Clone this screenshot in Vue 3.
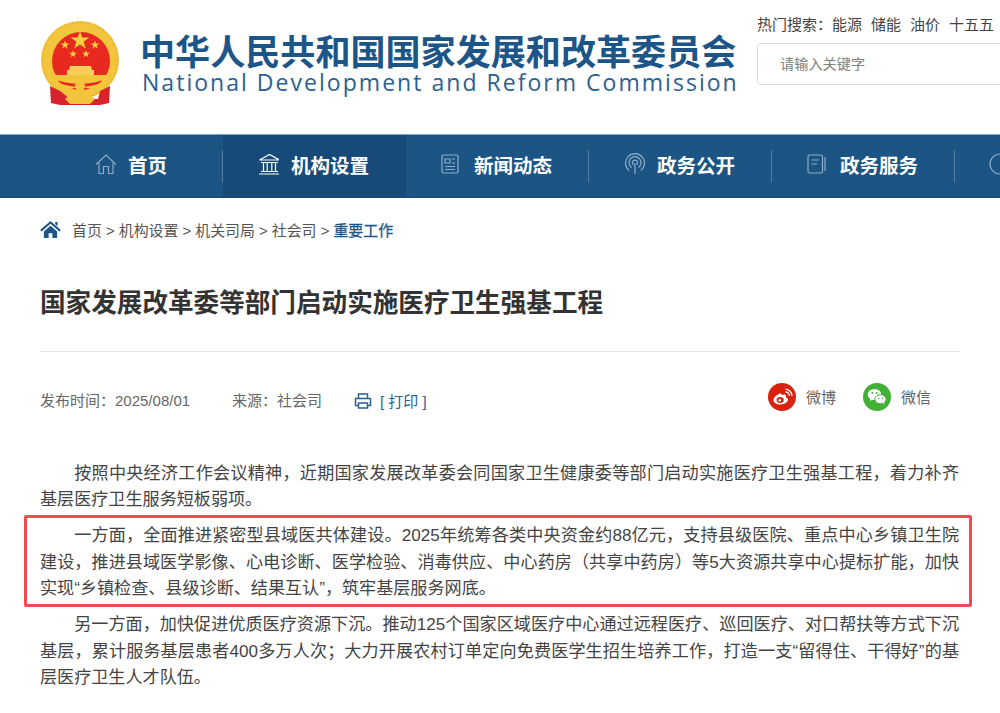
<template>
  <div class="page">
    <header class="top">
      <svg class="emblem" viewBox="0 0 80 86" width="80" height="86">
        <circle cx="40" cy="40" r="39" fill="#f2c53d" />
        <circle cx="40" cy="40" r="37.5" fill="none" stroke="#e2a92c" stroke-width="1" stroke-dasharray="2 2" />
        <circle cx="41" cy="41" r="29" fill="#e8291f" />
        <polygon points="40,11 42.2,17.6 49.3,17.6 43.6,21.8 45.7,28.5 40,24.4 34.3,28.5 36.4,21.8 30.7,17.6 37.8,17.6" fill="#f7d23e" />
        <polygon points="25,20.5 26,23.6 29.4,23.6 26.7,25.6 27.7,28.8 25,26.8 22.3,28.8 23.3,25.6 20.6,23.6 24,23.6" fill="#f7d23e" />
        <polygon points="55,20.5 56,23.6 59.4,23.6 56.7,25.6 57.7,28.8 55,26.8 52.3,28.8 53.3,25.6 50.6,23.6 54,23.6" fill="#f7d23e" />
        <polygon points="33,30 33.9,32.7 36.8,32.7 34.5,34.4 35.4,37.2 33,35.5 30.6,37.2 31.5,34.4 29.2,32.7 32.1,32.7" fill="#f7d23e" />
        <polygon points="46,30 46.9,32.7 49.8,32.7 47.5,34.4 48.4,37.2 46,35.5 43.6,37.2 44.5,34.4 42.2,32.7 45.1,32.7" fill="#f7d23e" />
        <path d="M30 46 H51 L52 50 H54 V55 H27 V50 H29 Z" fill="#f4cf5a" />
        <path d="M13 55 H67 L65 64 C58 70 50 70 41 66 C30 70 22 70 15 64 Z" fill="#f2c53d" />
        <path d="M18 60 C28 65 52 65 62 60 L60 63 C50 68 30 68 20 63 Z" fill="#e8291f" />
        <path d="M10 66 L20 71 L30 79 L58 79 L60 71 L70 66 L69 83 L60 85 L20 85 L11 83 Z" fill="#d8232a" />
        <circle cx="40" cy="66" r="5" fill="#f2c53d" />
        <path d="M25 79 C33 72 47 72 55 79 L50 84 H30 Z" fill="#f2c53d" />
      </svg>
      <div class="brand">
        <div class="cn">中华人民共和国国家发展和改革委员会</div>
        <div class="en">National Development and Reform Commission</div>
      </div>
      <div class="tools">
        <div class="hot">
          <span>热门搜索：</span>
          <span v-for="w in hotWords" :key="w" class="word">{{ w }}</span>
        </div>
        <div class="search">请输入关键字</div>
      </div>
    </header>

    <nav class="nav">
      <a v-for="(item, i) in navItems" :key="item.label" class="nav-item" :class="{ active: i === 1 }">
        <svg v-if="item.icon === 'home'" class="nav-ico" viewBox="-1 0 22 22" width="22" height="22">
          <path d="M1 11.5 L11 2 L21 11.5 M4 10 V20.5 H8.5 V13.5 H13.5 V20.5 H18 V10" />
        </svg>
        <svg v-else-if="item.icon === 'bank'" class="nav-ico bright" viewBox="-1.5 0 22 22" width="22" height="22">
          <path d="M1 7 L11 1.5 L21 7 Z M2.5 9.5 H19.5 M5 10 V18 M8.7 10 V18 M13.3 10 V18 M17 10 V18 M2.5 18.5 H19.5 M0.5 21 H21.5" />
        </svg>
        <svg v-else-if="item.icon === 'news'" class="nav-ico" viewBox="1 0 22 22" width="22" height="22">
          <path d="M4.5 2 H17.5 Q19 2 19 3.5 V18.5 Q19 20 17.5 20 H4.5 Q3 20 3 18.5 V3.5 Q3 2 4.5 2 Z M6 6 H11 V10 H6 Z M13 6 H16 M13 10 H16 M6 13.5 H16 M6 16.5 H16" />
        </svg>
        <svg v-else-if="item.icon === 'signal'" class="nav-ico" viewBox="-1 0 22 22" width="22" height="22">
          <path d="M5 17.5 A9.5 9.5 0 1 1 17 17.5 M7.5 14.5 A6 6 0 1 1 14.5 14.5 M9.5 11.8 A2.6 2.6 0 1 1 12.5 11.8 M11 10 V21" />
        </svg>
        <svg v-else-if="item.icon === 'book'" class="nav-ico" viewBox="1 0 22 22" width="22" height="22">
          <path d="M4.5 2 H16 Q17.5 2 17.5 3.5 V18.5 Q17.5 20 16 20 H4.5 Q3 20 3 18.5 V3.5 Q3 2 4.5 2 Z M6.5 7 H14 M6.5 11 H12 M20 4 V18" />
        </svg>
        <svg v-else class="nav-ico" viewBox="0 0 22 22" width="22" height="22">
          <circle cx="11" cy="11" r="10" />
        </svg>
        <span v-if="item.label">{{ item.label }}</span>
      </a>
    </nav>

    <main class="main">
      <div class="crumb">
        <svg class="crumb-home" viewBox="0 0 22 18" width="21" height="17">
          <path d="M11 0 L22 9.5 L20.4 11.2 L11 3 L1.6 11.2 L0 9.5 Z" />
          <path d="M4 11 L11 5 L18 11 V18 H13 V13 H9 V18 H4 Z" />
          <path d="M16 1 H18.5 V5.5 L16 3.3 Z" />
        </svg>
        <span>首页 &gt; 机构设置 &gt; 机关司局 &gt; 社会司 &gt; </span>
        <b>重要工作</b>
      </div>

      <h1 class="title">国家发展改革委等部门启动实施医疗卫生强基工程</h1>

      <div class="meta">
        <span class="date">发布时间：2025/08/01</span>
        <span class="source">来源：社会司</span>
        <svg class="printer" viewBox="0 0 18 16" width="18" height="16">
          <path d="M4.5 5 V1 H13.5 V5 M4.5 12.5 H1.5 V5.5 H16.5 V12.5 H13.5 M4.5 10 H13.5 V15 H4.5 Z" />
        </svg>
        <span class="print">[ 打印 ]</span>
        <div class="share">
          <svg viewBox="0 0 28 28" width="28" height="28">
            <circle cx="14" cy="14" r="14" fill="#d8230f" />
            <path d="M12 10.5 C8.5 11.6 5.5 14.6 5.5 17.2 C5.5 19.8 8.7 21.5 12.3 21.5 C16.8 21.5 20 19 20 16.6 C20 15.2 18.8 14.6 17.9 14.4 C18.4 13 18 11.6 16.4 11.4 C15.3 11.3 14.2 11.8 13.6 12.1 C13.8 10.9 13.3 10.1 12 10.5 Z" fill="#fff" />
            <ellipse cx="12.2" cy="17" rx="3.6" ry="2.9" fill="#d8230f" />
            <circle cx="11.7" cy="17.2" r="1.3" fill="#fff" />
            <path d="M17.5 9 A4 4 0 0 1 21.5 13 M17.5 6.2 A6.8 6.8 0 0 1 24 13" fill="none" stroke="#fff" stroke-width="1.3" />
          </svg>
          <span class="share-label">微博</span>
          <svg class="wx" viewBox="0 0 28 28" width="28" height="28">
            <circle cx="14" cy="14" r="14" fill="#41b035" />
            <ellipse cx="11.5" cy="11.5" rx="6.7" ry="5.6" fill="#fff" />
            <path d="M7.5 15 L6.8 18 L10 16.3 Z" fill="#fff" />
            <ellipse cx="17.5" cy="16.2" rx="5.6" ry="4.6" fill="#fff" stroke="#41b035" stroke-width="1" />
            <path d="M20 20 L21.4 22 L21 19 Z" fill="#fff" />
            <circle cx="9.3" cy="10" r="1" fill="#41b035" />
            <circle cx="13.6" cy="10" r="1" fill="#41b035" />
            <circle cx="15.6" cy="15.2" r=".8" fill="#41b035" />
            <circle cx="19.4" cy="15.2" r=".8" fill="#41b035" />
          </svg>
          <span class="share-label">微信</span>
        </div>
      </div>

      <article class="article">
        <p>按照中央经济工作会议精神，近期国家发展改革委会同国家卫生健康委等部门启动实施医疗卫生强基工程，着力补齐基层医疗卫生服务短板弱项。</p>
        <p class="marked">一方面，全面推进紧密型县域医共体建设。2025年统筹各类中央资金约88亿元，支持县级医院、重点中心乡镇卫生院建设，推进县域医学影像、心电诊断、医学检验、消毒供应、中心药房（共享中药房）等5大资源共享中心提标扩能，加快实现“乡镇检查、县级诊断、结果互认”，筑牢基层服务网底。</p>
        <p>另一方面，加快促进优质医疗资源下沉。推动125个国家区域医疗中心通过远程医疗、巡回医疗、对口帮扶等方式下沉基层，累计服务基层患者400多万人次；大力开展农村订单定向免费医学生招生培养工作，打造一支“留得住、干得好”的基层医疗卫生人才队伍。</p>
      </article>
    </main>
  </div>
</template>

<script setup>
const hotWords = ['能源', '储能', '油价', '十五五']
const navItems = [
  { label: '首页', icon: 'home' },
  { label: '机构设置', icon: 'bank' },
  { label: '新闻动态', icon: 'news' },
  { label: '政务公开', icon: 'signal' },
  { label: '政务服务', icon: 'book' },
  { label: '', icon: 'circle' }
]
</script>

<style>
html, body { margin: 0; background: #fff; overflow: hidden; }
</style>

<style scoped>
.page {
  width: 1000px;
  height: 713px;
  overflow: hidden;
  font-family: "Liberation Sans", "Noto Sans CJK SC", sans-serif;
  color: #333;
}
.top {
  height: 134px;
  box-sizing: border-box;
  padding: 20px 0 0 40px;
  display: flex;
  align-items: flex-start;
}
.emblem { flex: none; }
.brand { margin-left: 20px; width: 600px; flex: none; padding-top: 13px; }
.cn {
  font-size: 35.1px;
  line-height: 40px;
  font-weight: 700;
  color: #1c5587;
  white-space: nowrap;
}
.en {
  font-family: "Open Sans", sans-serif;
  font-size: 23px;
  line-height: 26px;
  letter-spacing: 2.03px;
  color: #2a6192;
  white-space: nowrap;
  margin-left: 2px;
  margin-top: -4px;
}
.tools { margin-left: 17px; flex: none; margin-top: -6px; }
.hot { font-size: 15px; line-height: 22px; color: #444; white-space: nowrap; }
.word { margin-right: 9px; }
.search {
  margin-top: 7px;
  width: 300px;
  height: 42px;
  box-sizing: border-box;
  border: 1px solid #ddd;
  border-radius: 4px;
  padding-left: 22px;
  font-size: 14.2px;
  line-height: 40px;
  color: #808080;
}
.nav {
  height: 64px;
  box-sizing: border-box;
  padding-left: 40px;
  display: flex;
  overflow: hidden;
  background: #1c5484;
  border-top: 1px solid #7fa6c6;
  border-bottom: 1px solid #164a75;
}
.nav-item {
  flex: none;
  width: 183px;
  box-sizing: border-box;
  padding: 0 0 4px 34px;
  display: flex;
  align-items: center;
  gap: 12px;
  position: relative;
  color: #fff;
  font-size: 19.5px;
  font-weight: 700;
}
.nav-item:first-child { padding-left: 54px; }
.nav-item::after {
  content: "";
  position: absolute;
  right: 0;
  top: 15px;
  bottom: 15px;
  width: 1px;
  background: rgba(255, 255, 255, 0.25);
}
.nav-item.active { background: #174a78; }
.nav-item.active::after { display: none; }
.nav-ico { flex: none; fill: none; stroke: #8fadc8; stroke-width: 1.2; }
.nav-ico.bright { stroke: #fff; }
.main { padding: 0 41px 0 40px; }
.crumb {
  margin-top: 20px;
  display: flex;
  align-items: center;
  height: 22px;
  font-size: 14.9px;
  color: #555;
  white-space: pre;
}
.crumb-home { fill: #1c5587; margin-right: 11px; flex: none; }
.crumb b { font-weight: 400; color: #1c5587; -webkit-text-stroke: 0.3px #1c5587; }
.title {
  margin: 45px 0 0;
  font-size: 25.6px;
  line-height: 36px;
  font-weight: 700;
  color: #333;
  white-space: nowrap;
  padding-bottom: 30px;
  border-bottom: 1px dotted #ccc;
}
.meta {
  margin-top: 31px;
  height: 32px;
  display: flex;
  align-items: center;
  font-size: 15px;
  color: #666;
}
.date { width: 192px; flex: none; }
.source { flex: none; width: 122px; }
.printer { fill: none; stroke: #2a6192; stroke-width: 1.5; flex: none; margin-top: 3px; }
.print { margin-left: 8px; color: #2a6192; margin-top: 3px; }
.share { margin-left: auto; display: flex; align-items: center; margin-right: 28px; margin-top: -5px; }
.share-label { margin-left: 10px; color: #666; }
.wx { margin-left: 27px; }
.article { margin-top: 46px; }
.article p {
  margin: 0 0 9.6px;
  font-size: 17.1px;
  line-height: 26.4px;
  text-indent: 2em;
  text-align: justify;
  color: #444;
}
.marked { position: relative; }
.marked::after {
  content: "";
  position: absolute;
  left: -16px;
  right: -13px;
  top: -8px;
  bottom: -4px;
  border: 3px solid #ee4b55;
  border-radius: 2px;
}
</style>
